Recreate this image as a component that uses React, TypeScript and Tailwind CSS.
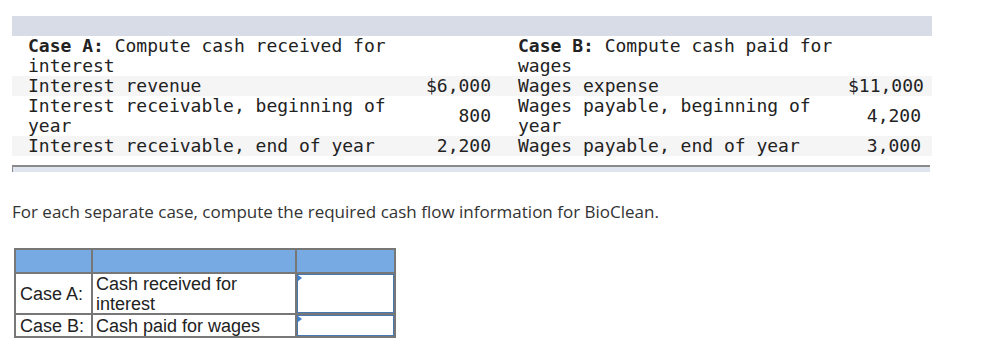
const mono = { fontFamily: '"DejaVu Sans Mono", monospace' };
const sans = { fontFamily: '"Liberation Sans", Arial, sans-serif' };

function Row({
  labelA,
  valueA,
  labelB,
  valueB,
  shaded,
}: {
  labelA: React.ReactNode;
  valueA?: string;
  labelB: React.ReactNode;
  valueB?: string;
  shaded?: boolean;
}) {
  return (
    <div className={`flex items-center pl-4 ${shaded ? "bg-[#f5f5f5]" : "bg-white"}`}>
      <div className="w-[380px] shrink-0">{labelA}</div>
      <div className="w-[83px] shrink-0 text-right">{valueA}</div>
      <div className="w-[27px] shrink-0" />
      <div className="w-[330px] shrink-0">{labelB}</div>
      <div className="w-[73px] shrink-0 text-right">{valueB}</div>
    </div>
  );
}

function InputCell() {
  return (
    <div className="relative bg-white border border-[#4a78b0] h-full">
      <div className="absolute left-0 top-0 w-0 h-0 border-y-[3px] border-y-transparent border-l-[4px] border-l-[#3f7fd0]" />
    </div>
  );
}

export default function App() {
  return (
    <div className="w-[990px] h-[348px] bg-white pt-4 pl-3">
      <div className="w-[920px] text-[18px] leading-5 text-[#222]" style={mono}>
        <div className="h-5 bg-[#d7dce6]" />
        <Row
          labelA={
            <>
              <span className="font-bold">Case A:</span> Compute cash received for interest
            </>
          }
          labelB={
            <>
              <span className="font-bold">Case B:</span> Compute cash paid for wages
            </>
          }
        />
        <Row labelA="Interest revenue" valueA="$6,000" labelB="Wages expense" valueB="$11,000" shaded />
        <Row
          labelA="Interest receivable, beginning of year"
          valueA="800"
          labelB="Wages payable, beginning of year"
          valueB="4,200"
        />
        <Row
          labelA="Interest receivable, end of year"
          valueA="2,200"
          labelB="Wages payable, end of year"
          valueB="3,000"
          shaded
        />
        <div className="mt-[9px] mr-[2px] h-[7px] border-t-2 border-l border-[#8a8a8a] bg-[#dfe5ef]" />
      </div>

      <p
        className="mt-[30px] text-[17px] leading-5 text-[#333]"
        style={{ fontFamily: '"Open Sans", "Liberation Sans", sans-serif' }}
      >
        For each separate case, compute the required cash flow information for BioClean.
      </p>

      <div
        className="mt-[26px] ml-[2px] w-[382px] grid grid-cols-[75px_202px_97px] grid-rows-[22px_39px_21px] gap-[2px] p-[2px] bg-[#777] text-[18px] leading-5 text-[#222]"
        style={sans}
      >
        <div className="bg-[#77aae2]" />
        <div className="bg-[#77aae2]" />
        <div className="bg-[#77aae2]" />

        <div className="bg-white flex items-center pl-1">Case A:</div>
        <div className="bg-white flex items-center pl-[3px]">Cash received for interest</div>
        <InputCell />

        <div className="bg-white flex items-center pl-1">Case B:</div>
        <div className="bg-white flex items-center pl-[3px]">Cash paid for wages</div>
        <InputCell />
      </div>
    </div>
  );
}
